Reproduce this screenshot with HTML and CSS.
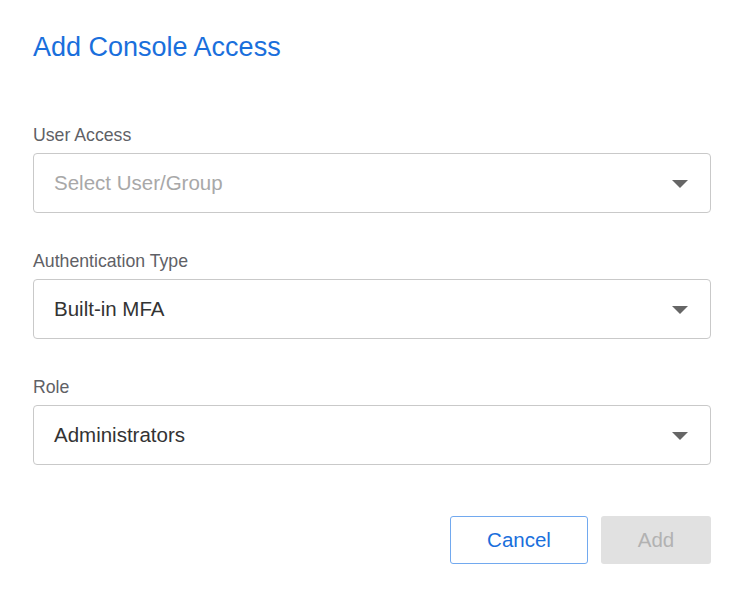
FILE: index.html
```html
<!DOCTYPE html>
<html lang="en">
<head>
<meta charset="utf-8">
<title>Add Console Access</title>
<link rel="stylesheet" href="styles.css">
</head>
<body>
<div class="dialog">
  <h1 class="title">Add Console Access</h1>
  <div class="form">
    <div class="field">
      <label class="label">User Access</label>
      <div class="select">
        <span class="value placeholder">Select User/Group</span>
        <span class="caret"></span>
      </div>
    </div>
    <div class="field">
      <label class="label">Authentication Type</label>
      <div class="select">
        <span class="value">Built-in MFA</span>
        <span class="caret"></span>
      </div>
    </div>
    <div class="field">
      <label class="label">Role</label>
      <div class="select">
        <span class="value">Administrators</span>
        <span class="caret"></span>
      </div>
    </div>
  </div>
  <div class="actions">
    <button class="btn btn-cancel">Cancel</button>
    <button class="btn btn-add" disabled>Add</button>
  </div>
</div>
</body>
</html>
```

FILE: styles.css
```css
* { box-sizing: border-box; }
html, body { margin: 0; padding: 0; background: #fff; }
body {
  font-family: "Liberation Sans", Arial, sans-serif;
  width: 742px;
  height: 597px;
  overflow: hidden;
}
.dialog {
  padding: 31px 31px 0 33px;
}
.title {
  margin: 0;
  font-size: 27px;
  line-height: 32px;
  font-weight: normal;
  color: #1a6fdc;
}
.form {
  margin-top: 62px;
  display: flex;
  flex-direction: column;
  gap: 38px;
}
.field {
  display: flex;
  flex-direction: column;
}
.label {
  font-size: 17.7px;
  line-height: 20px;
  color: #5f6166;
  margin-bottom: 8px;
}
.select {
  height: 60px;
  border: 1px solid #c9c9c9;
  border-radius: 4px;
  display: flex;
  align-items: center;
  justify-content: space-between;
  padding: 0 22px 0 20px;
}
.value {
  font-size: 20.5px;
  color: #333;
}
.placeholder { color: #a8a8a8; }
.caret {
  width: 0;
  height: 0;
  border-left: 8px solid transparent;
  border-right: 8px solid transparent;
  border-top: 8px solid #666;
  margin-top: 2px;
}
.actions {
  margin-top: 51px;
  display: flex;
  justify-content: flex-end;
  gap: 13px;
}
.btn {
  height: 48px;
  font-family: inherit;
  font-size: 20.5px;
  border-radius: 3px;
  padding: 0;
}
.btn-cancel {
  width: 138px;
  background: #fff;
  border: 1px solid #72a9ef;
  color: #1a6fdc;
}
.btn-add {
  width: 110px;
  background: #e1e1e1;
  border: none;
  color: #b2b2b2;
}
```
